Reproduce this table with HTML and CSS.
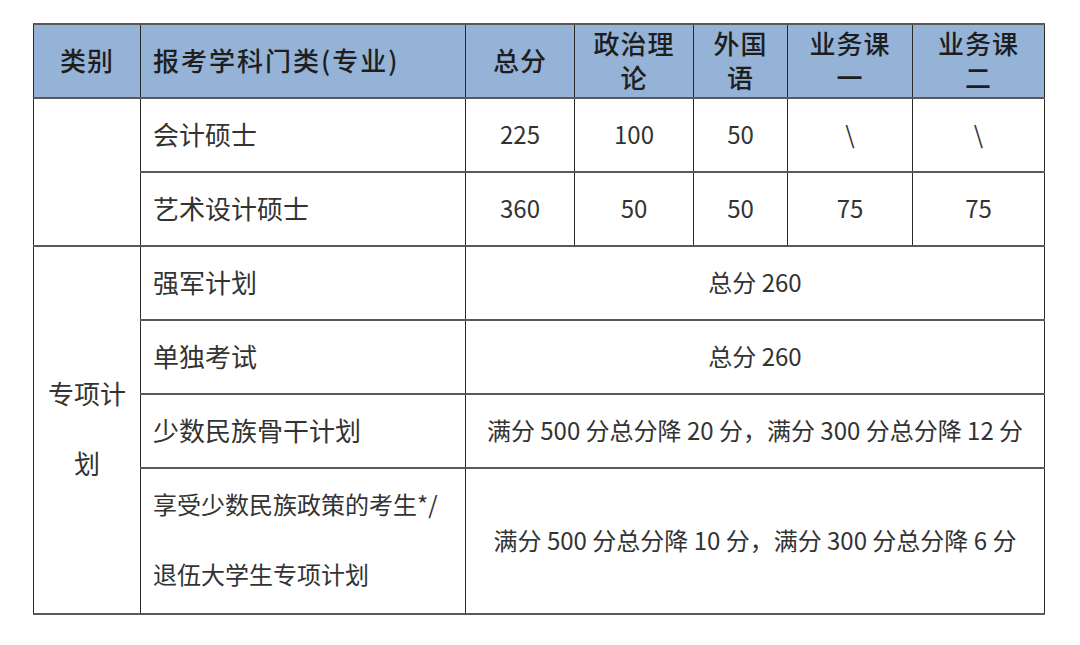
FILE: index.html
```html
<!DOCTYPE html>
<html lang="zh-CN">
<head>
<meta charset="utf-8">
<title>分数线</title>
<link rel="stylesheet" href="styles.css">
</head>
<body>
<table class="score-table">
  <colgroup>
    <col class="c1"><col class="c2"><col class="c3"><col class="c4"><col class="c5"><col class="c6"><col class="c7">
  </colgroup>
  <thead>
    <tr class="head">
      <th class="center">类别</th>
      <th class="left wide">报考学科门类(专业)</th>
      <th class="center">总分</th>
      <th class="center">政治理<br>论</th>
      <th class="center">外国<br>语</th>
      <th class="center">业务课<br>一</th>
      <th class="center">业务课<br>二</th>
    </tr>
  </thead>
  <tbody>
    <tr>
      <td rowspan="2"></td>
      <td class="left label">会计硕士</td>
      <td class="center">225</td>
      <td class="center">100</td>
      <td class="center">50</td>
      <td class="center">\</td>
      <td class="center">\</td>
    </tr>
    <tr>
      <td class="left label">艺术设计硕士</td>
      <td class="center">360</td>
      <td class="center">50</td>
      <td class="center">50</td>
      <td class="center">75</td>
      <td class="center">75</td>
    </tr>
    <tr>
      <td rowspan="4" class="center label tall">专项计<br>划</td>
      <td class="left label">强军计划</td>
      <td colspan="5" class="center">总分 260</td>
    </tr>
    <tr>
      <td class="left label">单独考试</td>
      <td colspan="5" class="center">总分 260</td>
    </tr>
    <tr>
      <td class="left label">少数民族骨干计划</td>
      <td colspan="5" class="center">满分 500 分总分降 20 分，满分 300 分总分降 12 分</td>
    </tr>
    <tr class="last">
      <td class="left tall nowrap">享受少数民族政策的考生*/<br>退伍大学生专项计划</td>
      <td colspan="5" class="center">满分 500 分总分降 10 分，满分 300 分总分降 6 分</td>
    </tr>
  </tbody>
</table>
</body>
</html>
```

FILE: styles.css
```css
html, body {
  margin: 0;
  padding: 0;
  background: #ffffff;
}

body {
  padding: 23px 0 0 33px;
  font-family: "Noto Sans CJK SC", "Noto Sans", sans-serif;
  color: #333333;
}

.score-table {
  border-collapse: collapse;
  table-layout: fixed;
  width: 1011px;
  font-size: 24px;
}

.c1 { width: 107px; }
.c2 { width: 325px; }
.c3 { width: 109px; }
.c4 { width: 119px; }
.c5 { width: 94px; }
.c6 { width: 125px; }
.c7 { width: 132px; }

.score-table th,
.score-table td {
  border-left: 1px solid #2a2a2a;
  border-right: 1px solid #2a2a2a;
  border-top: 2px solid #595959;
  border-bottom: 2px solid #595959;
  height: 74px;
  padding: 0 12px 4px;
  box-sizing: border-box;
  vertical-align: middle;
}

.head th {
  background: #95b3d7;
  color: #1e1e1e;
  font-weight: 500;
  font-size: 26px;
  letter-spacing: 1px;
  line-height: 34px;
  padding: 0 2px 3px;
}

.head th.left {
  padding-left: 12px;
}

.head th.wide {
  letter-spacing: 2px;
}

.label {
  font-size: 26px;
}

.last td {
  height: 146px;
}

.left { text-align: left; }
.center { text-align: center; }

.tall {
  line-height: 70px;
}

.nowrap {
  white-space: nowrap;
}
```
